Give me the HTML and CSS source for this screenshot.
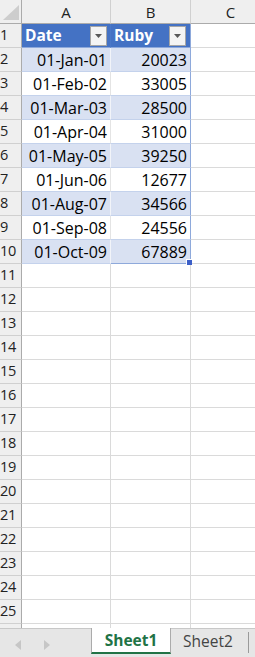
FILE: index.html
```html
<!DOCTYPE html>
<html>
<head>
<meta charset="utf-8">
<link rel="stylesheet" href="styles.css">
</head>
<body>
<div class="sheet">
  <div class="grid">
    <div class="corner"><svg width="22" height="24" viewBox="0 0 22 24"><polygon points="19,5 19,20 3,20" fill="#cdcdcd"/></svg></div>
    <div class="ch">A</div><div class="ch">B</div><div class="ch">C</div>

    <div class="rh"><span>1</span></div>
    <div class="th">Date<span class="dd"><svg width="7" height="4" viewBox="0 0 7 4"><polygon points="0,0 7,0 3.5,4" fill="#595959"/></svg></span></div>
    <div class="th last">Ruby<span class="dd"><svg width="7" height="4" viewBox="0 0 7 4"><polygon points="0,0 7,0 3.5,4" fill="#595959"/></svg></span></div>
    <div class="c"></div>

    <div class="rh"><span>2</span></div><div class="td band">01-Jan-01</div><div class="td band last">20023</div><div class="c"></div>
    <div class="rh"><span>3</span></div><div class="td">01-Feb-02</div><div class="td last">33005</div><div class="c"></div>
    <div class="rh"><span>4</span></div><div class="td band">01-Mar-03</div><div class="td band last">28500</div><div class="c"></div>
    <div class="rh"><span>5</span></div><div class="td">01-Apr-04</div><div class="td last">31000</div><div class="c"></div>
    <div class="rh"><span>6</span></div><div class="td band">01-May-05</div><div class="td band last">39250</div><div class="c"></div>
    <div class="rh"><span>7</span></div><div class="td">01-Jun-06</div><div class="td last">12677</div><div class="c"></div>
    <div class="rh"><span>8</span></div><div class="td band">01-Aug-07</div><div class="td band last">34566</div><div class="c"></div>
    <div class="rh"><span>9</span></div><div class="td">01-Sep-08</div><div class="td last">24556</div><div class="c"></div>
    <div class="rh"><span>10</span></div><div class="td band">01-Oct-09</div><div class="td band last end">67889<span class="handle"></span></div><div class="c"></div>

    <div class="rh"><span>11</span></div><div class="c"></div><div class="c"></div><div class="c"></div>
    <div class="rh"><span>12</span></div><div class="c"></div><div class="c"></div><div class="c"></div>
    <div class="rh"><span>13</span></div><div class="c"></div><div class="c"></div><div class="c"></div>
    <div class="rh"><span>14</span></div><div class="c"></div><div class="c"></div><div class="c"></div>
    <div class="rh"><span>15</span></div><div class="c"></div><div class="c"></div><div class="c"></div>
    <div class="rh"><span>16</span></div><div class="c"></div><div class="c"></div><div class="c"></div>
    <div class="rh"><span>17</span></div><div class="c"></div><div class="c"></div><div class="c"></div>
    <div class="rh"><span>18</span></div><div class="c"></div><div class="c"></div><div class="c"></div>
    <div class="rh"><span>19</span></div><div class="c"></div><div class="c"></div><div class="c"></div>
    <div class="rh"><span>20</span></div><div class="c"></div><div class="c"></div><div class="c"></div>
    <div class="rh"><span>21</span></div><div class="c"></div><div class="c"></div><div class="c"></div>
    <div class="rh"><span>22</span></div><div class="c"></div><div class="c"></div><div class="c"></div>
    <div class="rh"><span>23</span></div><div class="c"></div><div class="c"></div><div class="c"></div>
    <div class="rh"><span>24</span></div><div class="c"></div><div class="c"></div><div class="c"></div>
    <div class="rh"><span>25</span></div><div class="c"></div><div class="c"></div><div class="c"></div>
    <div class="rh"></div><div class="c"></div><div class="c"></div><div class="c"></div>
  </div>
</div>
<div class="tabs">
  <div class="nav">
    <svg width="6" height="10" viewBox="0 0 6 10"><polygon points="6,0 6,10 0,5" fill="#c6c6c6"/></svg>
    <svg width="6" height="10" viewBox="0 0 6 10"><polygon points="0,0 0,10 6,5" fill="#c6c6c6"/></svg>
  </div>
  <div class="tab active">Sheet1</div>
  <div class="tab">Sheet2</div>
  <div class="sep"></div>
</div>
</body>
</html>
```

FILE: styles.css
```css
* { box-sizing: border-box; }
html, body {
  margin: 0;
  padding: 0;
  width: 255px;
  height: 657px;
  overflow: hidden;
  background: #ffffff;
  font-family: "Open Sans", "Liberation Sans", sans-serif;
  color: #000;
}
.sheet {
  height: 628px;
  overflow: hidden;
}
.grid {
  display: grid;
  grid-template-columns: 22px 89px 80px 80px;
  grid-auto-rows: 24px;
  width: 271px;
  font-size: 16px;
}
.corner {
  background: #efefef;
  border-right: 1px solid #ababab;
  border-bottom: 1px solid #ababab;
}
.corner svg { display: block; }
.ch {
  background: #efefef;
  border-right: 1px solid #d0d0d0;
  border-bottom: 1px solid #ababab;
  text-align: center;
  line-height: 24px;
  font-size: 15px;
  color: #222;
}
.rh {
  background: #efefef;
  border-right: 1px solid #ababab;
  border-bottom: 1px solid #d0d0d0;
  display: flex;
  justify-content: flex-start;
  padding-left: 0;
  line-height: 22px;
  font-size: 14.5px;
  letter-spacing: -0.4px;
  color: #222;
}
.rh span { white-space: nowrap; }
.c {
  border-right: 1px solid #dadada;
  border-bottom: 1px solid #dadada;
}
.th {
  background: #4472c4;
  color: #fff;
  font-weight: bold;
  font-size: 15.5px;
  border-right: 1px solid #4a78c8;
  border-bottom: 1px solid #8ea9db;
  display: flex;
  align-items: center;
  justify-content: space-between;
  padding: 0 3px 1px 3px;
}
.th.last { border-right: 1px solid #8ea9db; padding-right: 4px; }
.dd {
  width: 17px;
  height: 20px;
  margin-top: 1px;
  background: #f4f4f4;
  border: 1px solid #a6a6a6;
  display: flex;
  align-items: center;
  justify-content: center;
}
.dd svg { display: block; }
.td {
  border-right: 1px solid #e4e4e4;
  border-bottom: 1px solid #c4d2ec;
  text-align: right;
  padding-right: 3px;
  line-height: 25px;
  position: relative;
}
.td.band { background: #d9e1f2; border-right-color: #f2f4f9; }
.td.last { border-right: 1px solid #8ea9db; }
.td.end { border-bottom-color: #8ea9db; }
.handle {
  position: absolute;
  right: -2px;
  bottom: -2px;
  width: 6px;
  height: 6px;
  background: #3c5fc8;
  border-left: 1px solid #fff;
  border-top: 1px solid #fff;
}
.tabs {
  height: 29px;
  background: #e6e6e6;
  border-top: 1px solid #c8c8c8;
  display: flex;
  align-items: flex-start;
  font-family: "Open Sans", "Liberation Sans", sans-serif;
  font-size: 15.5px;
}
.nav {
  width: 91px;
  height: 28px;
  display: flex;
  align-items: center;
  gap: 23px;
  padding-left: 15px;
  padding-top: 3px;
}
.nav svg { display: block; }
.tab {
  height: 25px;
  line-height: 24px;
  color: #444;
}
.tab.active {
  margin-top: -1px;
  height: 26px;
  width: 80px;
  background: #fff;
  border-left: 1px solid #ababab;
  border-right: 1px solid #ababab;
  border-bottom: 2px solid #217346;
  color: #217346;
  font-weight: bold;
  text-align: center;
}
.tab:not(.active) {
  width: 77px;
  padding-left: 12px;
}
.sep {
  margin-top: 3px;
  width: 1px;
  height: 21px;
  background: #9a9a9a;
}
```
